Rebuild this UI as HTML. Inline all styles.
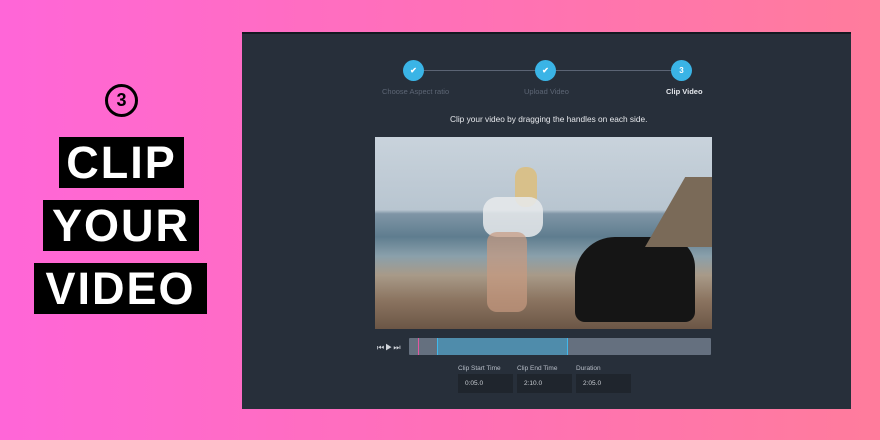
<!DOCTYPE html>
<html><head><style>
*{margin:0;padding:0;box-sizing:border-box}
body{width:880px;height:440px;overflow:hidden;background:linear-gradient(90deg,#ff66d8 0%,#ff70b8 50%,#ff7c9c 100%);font-family:"Liberation Sans",sans-serif;position:relative}
.ab{position:absolute}
.box{position:absolute;background:#000;color:#fff;font-weight:bold;font-size:45px;text-align:center;line-height:51px;letter-spacing:2px}
.panel{left:242px;top:32px;width:609px;height:377px;background:#272f3a;border-top:2px solid #141820}
.dot{position:absolute;width:21px;height:21px;border-radius:50%;background:#3ab4e6;color:#fff;font-size:8px;text-align:center;line-height:21px;font-weight:bold}
.lbl{position:absolute;font-size:7.5px;color:#5d6675;top:87px}
.f{position:absolute;font-size:6.5px;color:#b8bec8}
.in{position:absolute;top:374px;width:55px;height:19px;background:#1f252d;color:#c8ccd2;font-size:6.5px;line-height:19px;padding-left:7px}
</style></head><body>
<div class="ab" style="left:105px;top:84px;width:33px;height:33px;border:3px solid #000;border-radius:50%;text-align:center;line-height:27px;font-weight:bold;font-size:18px">3</div>
<div class="box" style="left:59px;top:137px;width:125px;height:51px">CLIP</div>
<div class="box" style="left:43px;top:200px;width:156px;height:51px">YOUR</div>
<div class="box" style="left:34px;top:263px;width:173px;height:51px">VIDEO</div>
<div class="ab panel"></div>
<div class="ab" style="left:414px;top:70px;width:268px;height:1px;background:#5b6474"></div>
<div class="dot" style="left:403px;top:60px">✔</div>
<div class="dot" style="left:535px;top:60px">✔</div>
<div class="dot" style="left:671px;top:60px">3</div>
<div class="lbl" style="left:382px">Choose Aspect ratio</div>
<div class="lbl" style="left:524px">Upload Video</div>
<div class="lbl" style="left:666px;color:#e4e7ec;font-weight:bold">Clip Video</div>
<div class="ab" style="left:450px;top:114px;font-size:8.3px;color:#e6e8ec">Clip your video by dragging the handles on each side.</div>
<div class="ab" style="left:375px;top:137px;width:337px;height:192px;background:linear-gradient(180deg,#c9d3dc 0%,#b8c5d0 38%,#7f95a6 40%,#5f7d8f 52%,#8aa0ab 62%,#a89a88 72%,#8b7460 85%,#6b5646 100%);overflow:hidden">
<div class="ab" style="left:140px;top:30px;width:22px;height:40px;background:#d8c08a;border-radius:10px"></div>
<div class="ab" style="left:108px;top:60px;width:60px;height:40px;background:#e8eaec;border-radius:14px;opacity:.85"></div>
<div class="ab" style="left:112px;top:95px;width:40px;height:80px;background:#c89a80;border-radius:10px;opacity:.7"></div>
<div class="ab" style="left:200px;top:100px;width:120px;height:85px;background:#151515;border-radius:40px 30px 10px 10px"></div>
<div class="ab" style="left:270px;top:40px;width:67px;height:70px;background:#7a6a58;clip-path:polygon(60% 0,100% 0,100% 100%,0 100%)"></div>
</div>
<div class="ab" style="left:377px;top:343px;font-size:8px;color:#d0d4da;letter-spacing:1px">⏮▶⏭</div>
<div class="ab" style="left:409px;top:338px;width:302px;height:17px;background:#65707f;border-radius:1px"></div>
<div class="ab" style="left:437px;top:338px;width:131px;height:17px;background:#4f8cab;border-left:1px solid #40b8ec;border-right:1px solid #40b8ec"></div>
<div class="ab" style="left:418px;top:338px;width:1px;height:17px;background:#e256a0"></div>
<div class="f" style="left:458px;top:365px">Clip Start Time</div>
<div class="f" style="left:517px;top:365px">Clip End Time</div>
<div class="f" style="left:576px;top:365px">Duration</div>
<div class="in" style="left:458px">0:05.0</div>
<div class="in" style="left:517px">2:10.0</div>
<div class="in" style="left:576px">2:05.0</div>
</body></html>
